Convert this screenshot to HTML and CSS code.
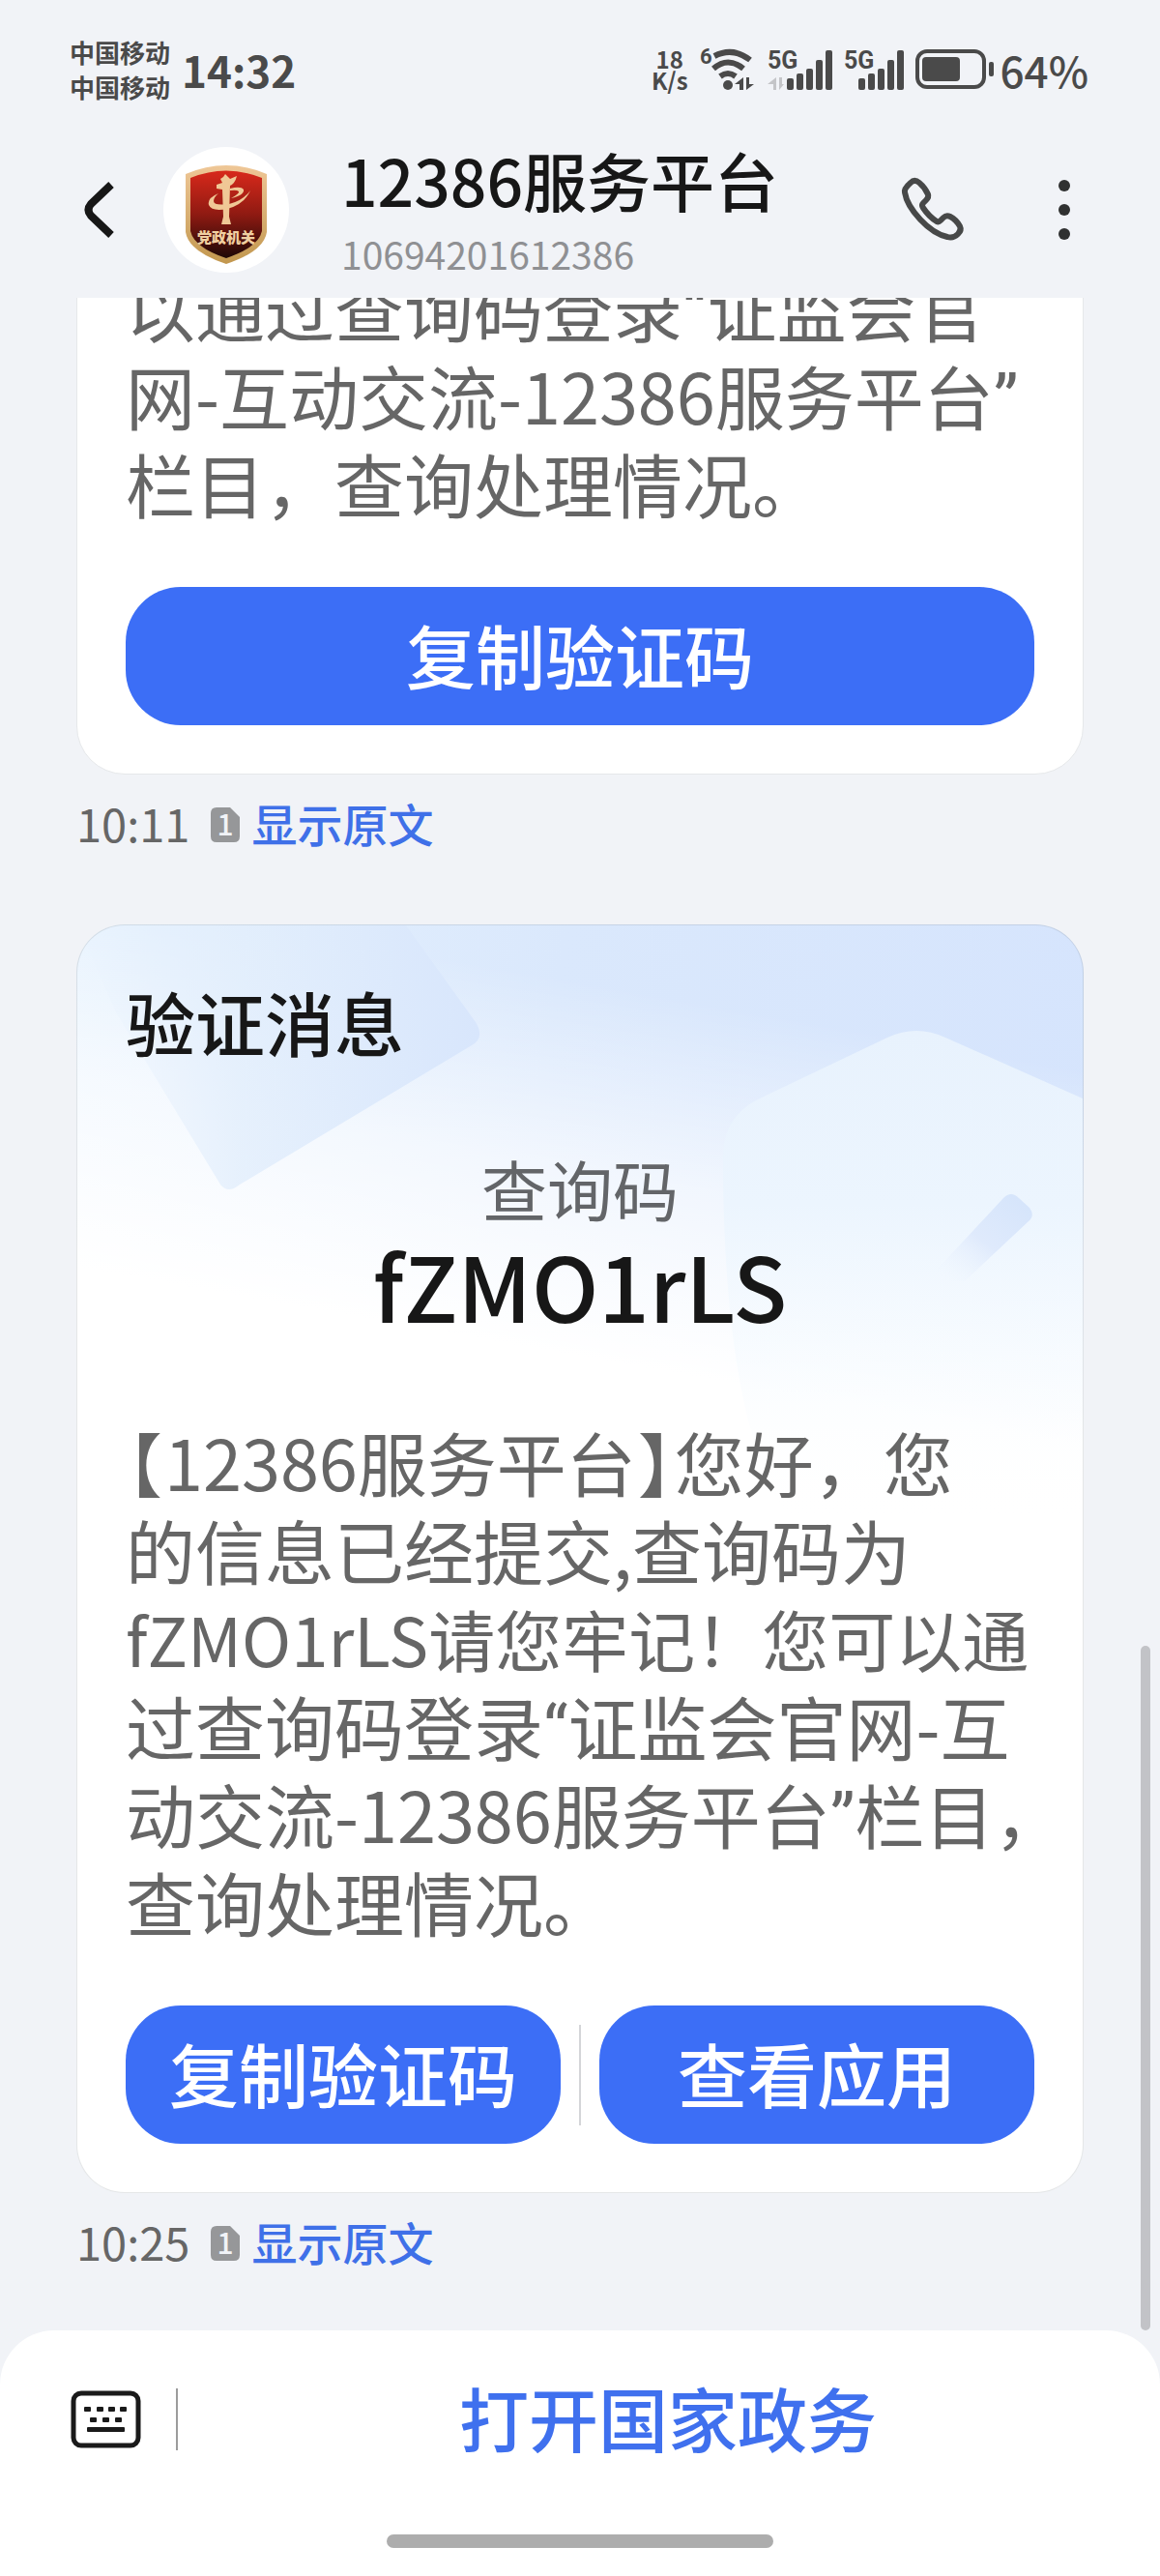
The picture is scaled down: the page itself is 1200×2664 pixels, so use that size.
FILE: index.html
```
<!DOCTYPE html>
<html lang="zh-CN">
<head>
    <meta charset="UTF-8">
    <meta name="viewport" content="width=device-width, initial-scale=1.0">
    <title>12386服务平台</title>
    <link rel="stylesheet" href="styles.css">
</head>
<body>
    <div class="status-bar">
        <div class="carriers">
            <span>中国移动</span>
            <span>中国移动</span>
        </div>
        <span class="clock">14:32</span>
        <div class="status-icons">
            <div class="speed">
                <span>18</span>
                <span>K/s</span>
            </div>
            <svg class="wifi" width="58" height="46" viewBox="0 0 58 46">
                <text x="0" y="17" font-size="22">6</text>
                <g fill="none" stroke="#4a4a4a" stroke-width="6">
                    <path d="M15 9Q34 -1 52 13"/>
                    <path d="M14 22Q29 9 45 22"/>
                    <path d="M21 30Q29 24 37 30"/>
                </g>
                <circle cx="29" cy="39" r="5"/>
                <path d="M45 31v13h-4v-6h-5zM48 31h3v7h5l-8 6z"/>
            </svg>
            <svg class="signal" width="67" height="46" viewBox="0 0 67 46">
                <text x="0" y="22" font-size="25">5G</text>
                <path class="faint" d="M9 31v13H6v-6H0zM12 31h3v7h2l-5 6z"/>
                <rect x="20" y="32" width="7" height="12" rx="2"/>
                <rect x="30" y="27" width="7" height="17" rx="2"/>
                <rect x="40" y="22" width="7" height="22" rx="2"/>
                <rect x="50" y="13" width="7" height="31" rx="2"/>
                <rect x="60" y="3" width="7" height="41" rx="2"/>
            </svg>
            <svg class="signal" width="62" height="46" viewBox="0 0 62 46">
                <text x="0" y="22" font-size="25">5G</text>
                <rect x="15" y="32" width="7" height="12" rx="2"/>
                <rect x="25" y="27" width="7" height="17" rx="2"/>
                <rect x="35" y="22" width="7" height="22" rx="2"/>
                <rect x="45" y="13" width="7" height="31" rx="2"/>
                <rect x="55" y="3" width="7" height="41" rx="2"/>
            </svg>
            <svg class="battery" width="82" height="46" viewBox="0 0 82 46">
                <rect x="2" y="4" width="69" height="37" rx="10" fill="none" stroke="#4a4a4a" stroke-width="4"/>
                <rect x="7" y="10" width="39" height="25" rx="4"/>
                <rect x="76" y="15" width="5" height="15" rx="2"/>
            </svg>
            <span class="percent">64%</span>
        </div>
    </div>

    <header class="chat-header">
        <button class="icon-btn" aria-label="返回">
            <svg width="34" height="60" viewBox="0 0 34 60">
                <path d="M28 4L7 24Q2 30 7 36L28 56" fill="none" stroke="#171717" stroke-width="8"/>
            </svg>
        </button>
        <div class="avatar">
            <svg width="130" height="130" viewBox="0 0 130 130">
                <defs>
                    <linearGradient id="red" x1="0" y1="0" x2="0" y2="1">
                        <stop offset="0" stop-color="#d8291b"/>
                        <stop offset="0.5" stop-color="#8f1a12"/>
                        <stop offset="1" stop-color="#1d0806"/>
                    </linearGradient>
                    <linearGradient id="gold" x1="0" y1="0" x2="0" y2="1">
                        <stop offset="0" stop-color="#efc797"/>
                        <stop offset="1" stop-color="#c2974e"/>
                    </linearGradient>
                </defs>
                <path d="M23 28Q65 10 107 28V88Q104 108 65 121Q26 108 23 88Z" fill="url(#gold)"/>
                <path d="M28 32Q65 17 102 32V87Q98 104 65 115Q32 104 28 87Z" fill="url(#red)"/>
                <g fill="#f0c896">
                    <path d="M61 37L59 33L62 31L64 28L67 31L69 33L76 30Q74 38 69 40L68 72L70 80H60L62 72L61 44L55 43V39Z"/>
                    <path d="M57 48Q45 53 47 60Q50 67 66 64Q84 59 90 45Q82 56 68 59Q52 61 52 56Q52 52 57 48Z"/>
                    <path d="M69 43Q80 40 83 44Q84 50 70 53Q79 48 78 46Q76 44 69 45Z"/>
                </g>
                <text x="65" y="99" text-anchor="middle" font-size="15" font-weight="900" fill="#f0cfa0">党政机关</text>
            </svg>
        </div>
        <div class="contact">
            <h1>12386服务平台</h1>
            <p>10694201612386</p>
        </div>
        <button class="icon-btn call" aria-label="拨打电话">
            <svg width="66" height="66" viewBox="0 0 66 66">
                <path d="M10 5Q14 1 19 5Q25 10 28 17Q29 20 26 23L23 26Q21 28 23 31Q29 40 37 45Q39 46 41 44L44 41Q47 38 51 40Q57 43 61 50Q63 54 59 58Q54 63 48 61Q34 58 20 43Q6 28 4 15Q3 11 10 5Z" fill="none" stroke="#474848" stroke-width="6" stroke-linejoin="round"/>
            </svg>
        </button>
        <button class="icon-btn" aria-label="更多">
            <svg width="14" height="64" viewBox="0 0 14 64">
                <g fill="#303131">
                    <circle cx="7" cy="7" r="6"/>
                    <circle cx="7" cy="32" r="6"/>
                    <circle cx="7" cy="57" r="6"/>
                </g>
            </svg>
        </button>
    </header>

    <main class="messages">
        <article class="message">
            <div class="card">
                <p class="text">以通过查询码登录<span class="quote">“</span>证监会官<br>网-互动交流-12386服务平台<span class="quote">”</span><br>栏目，查询处理情况。</p>
                <div class="actions">
                    <button class="btn">复制验证码</button>
                </div>
            </div>
            <div class="meta">
                <time>10:11</time>
                <svg class="sim" width="30" height="36" viewBox="0 0 30 36">
                    <path d="M6 0H20L30 10V30Q30 36 24 36H6Q0 36 0 30V6Q0 0 6 0Z" fill="#969799"/>
                    <text x="15" y="29" text-anchor="middle" font-size="30" font-weight="500" fill="#f1f3f7">1</text>
                </svg>
                <a href="#">显示原文</a>
            </div>
        </article>

        <article class="message">
            <div class="card card-code">
                <svg class="decor" viewBox="0 0 1040 620" preserveAspectRatio="xMidYMin slice" aria-hidden="true">
                    <defs>
                        <linearGradient id="tile" x1="0" y1="0" x2="1" y2="0">
                            <stop offset="0" stop-color="#e4effc" stop-opacity="0"/>
                            <stop offset="0.4" stop-color="#e2eefc" stop-opacity="0.8"/>
                            <stop offset="1" stop-color="#d8e6fc"/>
                        </linearGradient>
                        <linearGradient id="hex" x1="0" y1="0" x2="0" y2="1">
                            <stop offset="0" stop-color="#e8f2fd"/>
                            <stop offset="0.35" stop-color="#ecf5fe"/>
                            <stop offset="0.65" stop-color="#f6fbff" stop-opacity="0.7"/>
                            <stop offset="1" stop-color="#ffffff" stop-opacity="0"/>
                        </linearGradient>
                        <linearGradient id="tick" x1="1" y1="0" x2="0" y2="1">
                            <stop offset="0.1" stop-color="#d6e5fb"/>
                            <stop offset="0.5" stop-color="#dfeafc"/>
                            <stop offset="0.9" stop-color="#eef5fe" stop-opacity="0"/>
                        </linearGradient>
                    </defs>
                    <path d="M0 0H340L412 100Q422 116 408 124L168 268Q156 278 148 268L40 90Z" fill="url(#tile)"/>
                    <path d="M668 240Q668 196 708 178L838 116Q868 102 898 116L1040 179V620H740Q668 520 668 240Z" fill="url(#hex)"/>
                    <path d="M958 282Q966 274 974 282L985 292Q991 300 984 306L918 368H878Z" fill="url(#tick)"/>
                </svg>
                <h2>验证消息</h2>
                <p class="label">查询码</p>
                <p class="code">fZMO1rLS</p>
                <p class="text"><span class="bracket">【</span>12386服务平台<span class="bracket">】</span>您好，您<br>的信息已经提交,查询码为<br><span class="long-line">fZMO1rLS请您牢记！您可以通</span><br>过查询码登录<span class="quote">“</span>证监会官网-互<br>动交流-12386服务平台<span class="quote">”</span>栏目，<br>查询处理情况。</p>
                <div class="actions">
                    <button class="btn">复制验证码</button>
                    <span class="divider"></span>
                    <button class="btn">查看应用</button>
                </div>
            </div>
            <div class="meta">
                <time>10:25</time>
                <svg class="sim" width="30" height="36" viewBox="0 0 30 36">
                    <path d="M6 0H20L30 10V30Q30 36 24 36H6Q0 36 0 30V6Q0 0 6 0Z" fill="#969799"/>
                    <text x="15" y="29" text-anchor="middle" font-size="30" font-weight="500" fill="#f1f3f7">1</text>
                </svg>
                <a href="#">显示原文</a>
            </div>
        </article>
        <div class="scroll-thumb"></div>
    </main>

    <footer class="bottom-bar">
        <div class="menu">
            <button class="icon-btn" aria-label="键盘">
                <svg width="74" height="60" viewBox="0 0 74 60">
                    <rect x="3" y="3" width="67" height="54" rx="8" fill="none" stroke="#1a1a1a" stroke-width="5"/>
                    <g fill="#1a1a1a">
                        <rect x="14" y="17" width="7" height="5" rx="1"/>
                        <rect x="27" y="17" width="7" height="5" rx="1"/>
                        <rect x="39" y="17" width="7" height="5" rx="1"/>
                        <rect x="51" y="17" width="7" height="5" rx="1"/>
                        <rect x="20" y="28" width="7" height="5" rx="1"/>
                        <rect x="33" y="28" width="7" height="5" rx="1"/>
                        <rect x="46" y="28" width="7" height="5" rx="1"/>
                        <rect x="17" y="38" width="39" height="5" rx="1"/>
                    </g>
                </svg>
            </button>
            <button class="open-app">打开国家政务</button>
        </div>
        <div class="home-indicator"></div>
    </footer>
</body>
</html>
```

FILE: styles.css
```
* {
    box-sizing: border-box;
    margin: 0;
    padding: 0;
}

body {
    display: flex;
    flex-direction: column;
    height: 100vh;
    font-family: "Noto Sans CJK SC", sans-serif;
    background-color: #f1f3f7;
    color: #171717;
}

button {
    border: none;
    background: none;
    font-family: inherit;
    cursor: pointer;
}

svg {
    display: block;
    overflow: visible;
}

/* status bar */
.status-bar {
    display: flex;
    align-items: center;
    padding: 36px 74px 0 72px;
    color: #4a4a4a;
    font-weight: 700;
}

.status-bar svg {
    fill: #4a4a4a;
}

.carriers {
    display: flex;
    flex-direction: column;
    font-size: 26px;
    line-height: 36px;
}

.clock,
.percent {
    font-size: 44px;
    line-height: 72px;
}

.clock {
    margin-left: 12px;
}

.status-icons {
    display: flex;
    align-items: center;
    gap: 12px;
    margin-left: auto;
}

.speed {
    display: flex;
    flex-direction: column;
    align-items: center;
    font-size: 24px;
    line-height: 22px;
}

.status-icons text {
    font-family: Roboto, sans-serif;
    font-weight: 700;
}

.status-icons .faint {
    fill: #c4c5c8;
}

.percent {
    margin-left: -6px;
    font-weight: 500;
}

/* header */
.chat-header {
    display: flex;
    align-items: center;
    height: 200px;
    padding: 17px 92px 0 87px;
}

.icon-btn {
    flex-shrink: 0;
}

.avatar {
    flex-shrink: 0;
    margin-left: 48px;
    border-radius: 50%;
    background-color: #fff;
}

.contact {
    flex: 1;
    margin-left: 54px;
}

.contact h1 {
    margin-bottom: 4px;
    font-size: 66px;
    font-weight: 500;
    line-height: 86px;
}

.contact p {
    font-size: 39px;
    line-height: 60px;
    color: #8f9093;
}

.call {
    margin-right: 96px;
}

/* messages, scrolled to the newest one */
.messages {
    position: relative;
    display: flex;
    flex: 1;
    flex-direction: column;
    justify-content: flex-end;
    gap: 73px;
    min-height: 0;
    padding: 0 79px 60px;
    overflow: hidden;
}

.card {
    position: relative;
    padding: 50px;
    border: 1px solid #e6e8ea;
    border-radius: 50px;
    background-color: #fff;
}

.card-code {
    border-color: rgba(110, 120, 130, 0.18);
    background:
        linear-gradient(190deg, rgba(255, 255, 255, 0) 10%, rgba(255, 255, 255, 0.65) 23%, #fff 36%) border-box,
        linear-gradient(100deg, #e6f2fe, #dae8fc 40%, #d4e3fd) border-box;
    overflow: hidden;
}

.card-code > * {
    position: relative;
}

.card-code .decor {
    position: absolute;
    top: 0;
    left: 0;
    width: 100%;
    height: 620px;
}

.card h2 {
    font-size: 72px;
    font-weight: 500;
    line-height: 98px;
}

.label {
    margin-top: 84px;
    font-size: 68px;
    line-height: 80px;
    text-align: center;
    color: #636568;
}

.code {
    margin: 4px 0 82px;
    font-size: 92px;
    font-weight: 500;
    line-height: 110px;
    text-align: center;
}

.text {
    font-size: 72px;
    line-height: 91px;
    color: #666;
    white-space: nowrap;
}

.quote {
    font-family: Roboto, sans-serif;
    line-height: 1;
}

.bracket {
    margin: 0 2px;
    font-feature-settings: "halt";
}

.long-line {
    font-size: 69px;
    line-height: 1;
}

.actions {
    display: flex;
    align-items: center;
    gap: 19px;
    margin-top: 63px;
}

.btn {
    flex: 1;
    height: 143px;
    padding-bottom: 6px;
    border-radius: 57px;
    background-color: #3c6ef6;
    color: #fff;
    font-size: 72px;
    font-weight: 500;
    line-height: 100px;
}

.divider {
    width: 2px;
    height: 104px;
    background-color: #d4d5d8;
}

.meta {
    display: flex;
    align-items: center;
    margin-top: 22px;
    font-size: 47px;
    line-height: 56px;
}

.meta time,
.meta a {
    padding-bottom: 4px;
}

.meta time {
    color: #666;
}

.sim {
    margin: 0 12px 0 22px;
}

.meta a {
    color: #3f70e8;
    font-weight: 500;
    text-decoration: none;
}

.scroll-thumb {
    position: absolute;
    right: 10px;
    bottom: 0;
    width: 10px;
    height: 708px;
    border-radius: 5px;
    background-color: #c2c3c7;
}

/* bottom bar */
.bottom-bar {
    display: flex;
    flex-direction: column;
    justify-content: space-between;
    align-items: center;
    height: 254px;
    padding: 32px 0 29px;
    border-radius: 56px 56px 0 0;
    background-color: #fff;
}

.menu {
    display: flex;
    align-items: center;
    width: 100%;
    padding-left: 73px;
}

.open-app {
    flex: 1;
    margin-left: 35px;
    padding-bottom: 6px;
    color: #3f70ee;
    font-size: 72px;
    font-weight: 500;
    line-height: 114px;
    background: linear-gradient(#9c9c9c, #9c9c9c) left center / 2px 64px no-repeat;
}

.home-indicator {
    width: 400px;
    height: 14px;
    border-radius: 7px;
    background-color: #adadad;
}
```
